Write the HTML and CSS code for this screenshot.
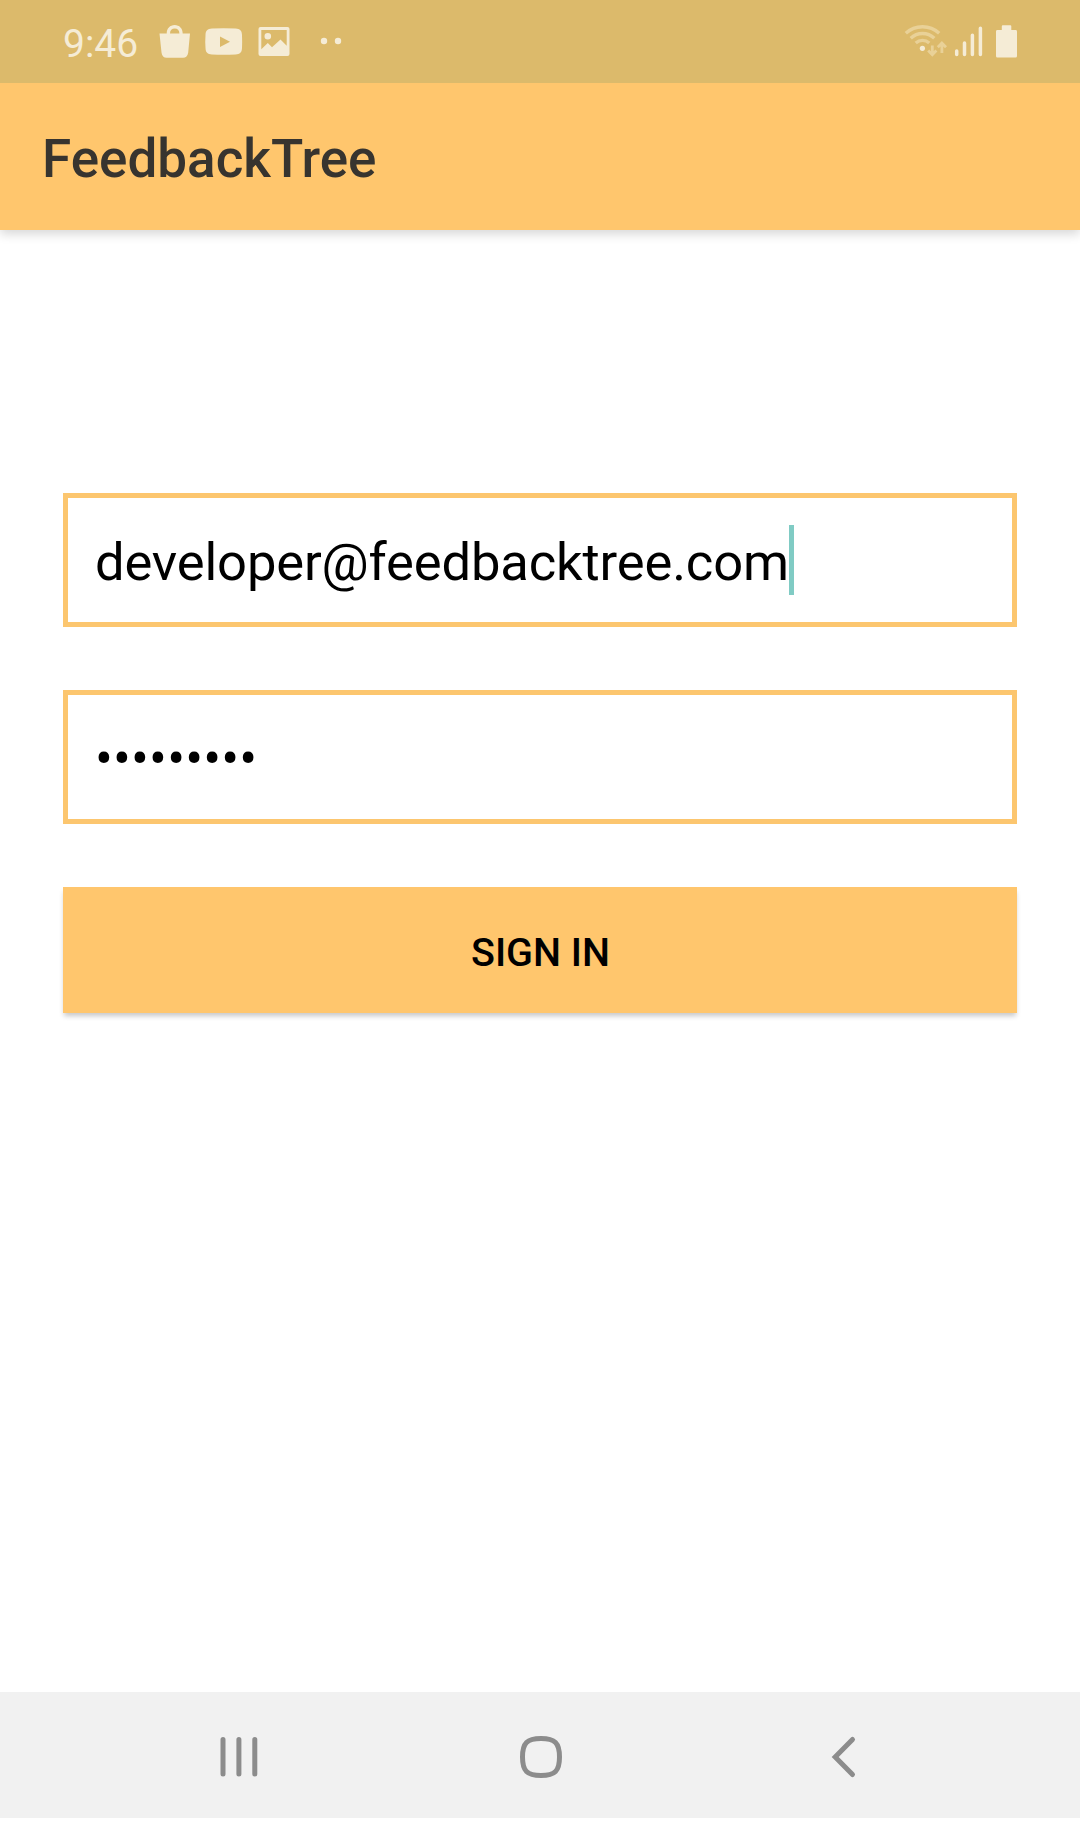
FILE: index.html
```html
<!DOCTYPE html>
<html lang="en">
<head>
<meta charset="utf-8">
<title>FeedbackTree</title>
<link rel="stylesheet" href="styles.css">
</head>
<body>
<div class="screen">
  <div class="status-bar">
    <span class="clock">9:46</span>
    <svg class="status-left" viewBox="155 0 190 83" width="190" height="83" fill="#f5ecd6">
      <path d="M159.5 33.5h7.2c0-5 3.3-8.5 8-8.5s8 3.5 8 8.5h7.3l-1.8 19c-.4 3.500-2.400 5.200-5.200 5.200h-16.300c-2.900 0-4.800-1.700-5.200-5.200zM170 33.500h9.400c0-3-1.900-4.900-4.700-4.900s-4.700 1.900-4.700 4.900z"/>
      <path fill-rule="evenodd" d="M212 28.500q11.500-.6 23.500 0c4.500.2 6.300 2 6.500 6.500q.3 6.500 0 13c-.2 4.500-2 6.300-6.500 6.500q-12 .6-23.500 0c-4.500-.2-6.300-2-6.500-6.500q-.5-6.500 0-13c.2-4.500 2-6.300 6.500-6.500zM220 36.500v10.500l10-5.300z"/>
      <path fill-rule="evenodd" d="M260.500 27h27q2 0 2 2v25q0 2-2 2h-27q-2 0-2-2v-25q0-2 2-2zM261.300 30v19.200l6.500-6.200 4.200 4.200 8.500-7.700 6.200 6.200v-15.700zM264.500 36.200a3.300 3.300 0 1 0 6.600 0a3.300 3.300 0 1 0-6.600 0z"/>
      <circle cx="324" cy="41" r="3.200"/><circle cx="338" cy="41" r="3.200"/>
    </svg>
    <svg class="status-right" viewBox="900 0 120 83" width="120" height="83" fill="#f5ecd6">
      <g fill="none" stroke="#e9d197" stroke-width="3.400">
        <path d="M905.800 33.200q7-6.500 16.700-6.500t16.700 6.500M910.700 38.200q5-4.700 11.800-4.700t11.800 4.700M915.700 43q3-2.600 6.800-2.600t6.800 2.600"/>
        <path stroke-width="2.800" d="M932.300 45.500v9M928.200 50.500l4.100 4.200 4.100-4.200M941.900 53v-9.500M937.800 47.300l4.100-4.200 4.100 4.200"/>
      </g>
      <circle cx="922.400" cy="48.300" r="2.600"/>
      <g stroke="#f5ecd6" stroke-width="3.500" stroke-linecap="round">
        <path d="M956.700 51v3.500M964.500 43v11.500M972.400 35.200v19.300M980.400 28.200v26.300"/>
      </g>
      <path d="M1002.800 25.200h7.500q1 0 1 1v3.800h4.300q1.400 0 1.400 1.400v24.700q0 1.500-1.400 1.500h-18.200q-1.400 0-1.400-1.500v-24.700q0-1.400 1.400-1.400h4.400v-3.800q0-1 1-1z"/>
    </svg>
  </div>
  <header class="app-bar"><h1 class="app-title">FeedbackTree</h1></header>
  <main class="form">
    <div class="field"><span class="email">developer@feedbacktree.com</span><span class="caret"></span></div>
    <div class="field"><span class="password">•••••••••</span></div>
    <button class="sign-in" type="button"><span>SIGN IN</span></button>
  </main>
  <nav class="nav-bar">
    <svg class="recents" viewBox="220 1692 38 126" width="38" height="126"><path d="M223 1739.500v34.500M238.900 1739.500v34.500M254.800 1739.500v34.500" stroke-linecap="round"/></svg>
    <svg class="home" viewBox="520 1692 42 126" width="42" height="126"><path d="M541 1738.500c14 0 18.500 4.500 18.500 18.500s-4.500 18.500-18.500 18.500-18.500-4.500-18.500-18.500 4.500-18.500 18.500-18.500z"/></svg>
    <svg class="back" viewBox="830 1692 27 126" width="27" height="126"><path d="M852.500 1739.500l-17.300 17.500 17.300 17.500" stroke-linecap="round"/></svg>
  </nav>
</div>
</body>
</html>
```
FILE: styles.css
```css
* { box-sizing: border-box; }
body { margin: 0; background: #fff; font-family: Roboto, "Liberation Sans", sans-serif; }
svg { display: block; flex: none; }
.screen { display: flex; flex-direction: column; width: 1080px; height: 1822px; padding-bottom: 4px; overflow: hidden; }
.status-bar { display: flex; height: 83px; flex: none; padding: 0 60px 0 63px; background: #dcba6b; }
.clock { width: 92px; padding-top: 4px; font-size: 39px; line-height: 80px; color: #f5ecd6; white-space: nowrap; }
.status-right { margin-left: auto; }
.app-bar { display: flex; align-items: center; flex: none; height: 147px; padding: 5px 42px 0; background: #ffc66d; box-shadow: 0 4px 10px rgba(0, 0, 0, .16); clip-path: inset(0 0 -20px 0); }
.app-title { margin: 0; font-size: 53px; font-weight: 500; line-height: 62px; color: #37342f; }
.form { display: flex; flex-direction: column; flex: 1; gap: 63px; padding: 263px 63px 0; }
.field { display: flex; align-items: center; height: 134px; padding: 0 27px; border: 5px solid #fcc66f; background: #fff; color: #000; }
.email { padding-top: 4px; font-size: 52.500px; line-height: 70px; letter-spacing: -.14px; white-space: nowrap; }
.caret { width: 5px; height: 70px; background: #80cbc4; }
.password { padding-top: 4px; font-size: 53px; line-height: 70px; letter-spacing: .15px; }
.sign-in { display: flex; align-items: center; justify-content: center; height: 126px; padding: 6px 0 0 1px; border: 0; background: #ffc66d; box-shadow: 0 4px 5px -1px rgba(0, 0, 0, .22); font: 500 39.500px/48px Roboto, "Liberation Sans", sans-serif; color: #000; }
.nav-bar { display: flex; flex: none; height: 126px; padding-left: 220px; background: #f1f1f1; }
.nav-bar path { fill: none; stroke: #8c8c8c; stroke-width: 5; }
.home { margin-left: 262px; }
.back { margin-left: 268px; }
```
